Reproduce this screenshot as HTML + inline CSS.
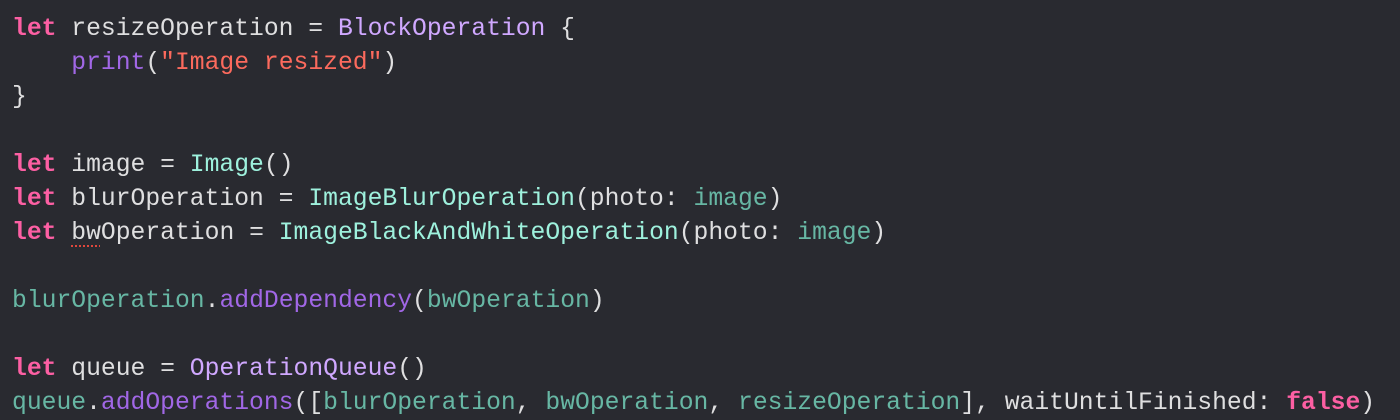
<!DOCTYPE html>
<html><head><meta charset="utf-8"><style>
html,body{margin:0;padding:0;background:#292a30;width:1400px;height:420px;overflow:hidden}
pre{margin:0;padding:12px 0 0 12px;font-family:"Liberation Mono",monospace;font-size:24.7px;line-height:34px;color:#dfdfe0}
.k{color:#fc5fa3;font-weight:bold}.t{color:#d0a8ff}.m{color:#9ef1dd}.f{color:#a167e6}.s{color:#fc6a5d}.v{color:#67b7a4}
.u{text-decoration:underline dotted #e0473c;text-decoration-thickness:2px;text-underline-offset:6px}
</style></head><body><pre><span class="k">let</span> resizeOperation = <span class="t">BlockOperation</span> {
    <span class="f">print</span>(<span class="s">"Image resized"</span>)
}

<span class="k">let</span> image = <span class="m">Image</span>()
<span class="k">let</span> blurOperation = <span class="m">ImageBlurOperation</span>(photo: <span class="v">image</span>)
<span class="k">let</span> <span class="u">bw</span>Operation = <span class="m">ImageBlackAndWhiteOperation</span>(photo: <span class="v">image</span>)

<span class="v">blurOperation</span>.<span class="f">addDependency</span>(<span class="v">bwOperation</span>)

<span class="k">let</span> queue = <span class="t">OperationQueue</span>()
<span class="v">queue</span>.<span class="f">addOperations</span>([<span class="v">blurOperation</span>, <span class="v">bwOperation</span>, <span class="v">resizeOperation</span>], waitUntilFinished: <span class="k">false</span>)</pre></body></html>
